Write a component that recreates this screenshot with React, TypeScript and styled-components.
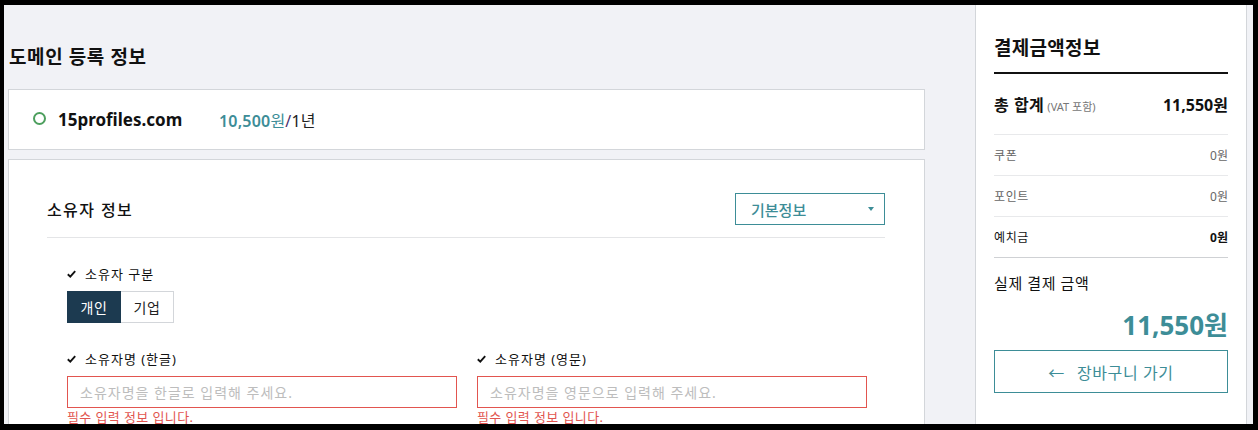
import styled, { createGlobalStyle } from "styled-components";

const GlobalStyle = createGlobalStyle`
  html, body {
    margin: 0;
    padding: 0;
    background: #000;
  }
  body {
    font-family: "Noto Sans", "Noto Sans CJK KR", sans-serif;
    color: #111;
  }
`;

const TEAL = "#3d8d97";
const RED = "#e2554f";

// #region styled
const Frame = styled.div`
  height: 430px;
  box-sizing: border-box;
  padding: 5px 5px 6px 4px;
  overflow: hidden;
`;

const Page = styled.div`
  height: 100%;
  display: flex;
  background: #f1f2f6;
  overflow: hidden;
`;

const Main = styled.div`
  width: 971px;
  flex-shrink: 0;
  box-sizing: border-box;
  padding: 40px 50px 0 4px;
`;

const PageTitle = styled.h2`
  margin: 0 0 20px 1px;
  font-size: 19px;
  line-height: 24px;
  letter-spacing: 0.6px;
  font-weight: 700;
`;

const Card = styled.section`
  background: #fff;
  border: 1px solid #d3d6da;
  margin-bottom: 9px;
`;

const DomainRow = styled.div`
  height: 59px;
  display: flex;
  align-items: center;
  padding-left: 24px;
`;

const Radio = styled.span`
  width: 9px;
  height: 9px;
  border: 2px solid #4d9f5e;
  border-radius: 50%;
  margin-right: 12px;
  margin-top: -3px;
`;

const DomainName = styled.span`
  font-size: 17px;
  font-weight: 700;
  width: 161px;
`;

const Price = styled.span`
  font-size: 16px;
  letter-spacing: 0.2px;
  color: #222;
  em {
    font-style: normal;
    font-weight: 600;
    color: ${TEAL};
  }
  b {
    font-weight: 400;
    color: ${TEAL};
  }
  i {
    font-style: normal;
    color: #4a2f6e;
  }
`;

const OwnerBody = styled.div`
  padding: 33px 39px 40px 38px;
`;

const OwnerHeader = styled.div`
  display: flex;
  align-items: center;
  justify-content: space-between;
  padding-bottom: 12px;
  border-bottom: 1px solid #e4e5e7;
`;

const SectionTitle = styled.h3`
  margin: 0;
  font-size: 16px;
  letter-spacing: 1.4px;
  font-weight: 500;
`;

const Select = styled.div`
  display: flex;
  align-items: center;
  justify-content: space-between;
  padding: 0 10px 0 15px;
  box-sizing: border-box;
  width: 150px;
  height: 32px;
  border: 1px solid ${TEAL};
  color: ${TEAL};
  font-size: 15px;
  font-weight: 500;
`;

const Caret = styled.span`
  width: 0;
  height: 0;
  border-left: 3px solid transparent;
  border-right: 3px solid transparent;
  border-top: 4px solid ${TEAL};
`;

const Form = styled.div`
  padding: 27px 20px 0;
`;

const FieldRow = styled.div`
  display: grid;
  grid-template-columns: 390px 390px;
  column-gap: 20px;
  margin-bottom: 27px;
`;

const Field = styled.div`
  display: flex;
  flex-direction: column;
  align-items: flex-start;
`;

const Label = styled.div`
  display: flex;
  align-items: center;
  gap: 9px;
  font-size: 13px;
  letter-spacing: 1px;
  line-height: 18px;
  margin-bottom: 8px;
  color: #111;
`;

const Segment = styled.div`
  display: flex;
`;

const SegButton = styled.button<{ $active?: boolean }>`
  width: 54px;
  height: 32px;
  font-family: inherit;
  font-size: 14px;
  letter-spacing: 0.5px;
  padding: 0;
  cursor: pointer;
  border: 1px solid ${(p) => (p.$active ? "#1c3a50" : "#d3d6da")};
  background: ${(p) => (p.$active ? "#1c3a50" : "#fff")};
  color: ${(p) => (p.$active ? "#fff" : "#222")};
  & + & {
    border-left: none;
    width: 53px;
  }
`;

const Input = styled.input`
  width: 390px;
  height: 32px;
  box-sizing: border-box;
  border: 1px solid ${RED};
  padding: 0 12px;
  font-family: inherit;
  font-size: 14px;
  letter-spacing: 1px;
  outline: none;
  &::placeholder {
    color: #bdbdbd;
  }
`;

const ErrorText = styled.div`
  color: ${RED};
  font-size: 13px;
  letter-spacing: 0.4px;
  line-height: 18px;
`;

const Side = styled.aside`
  width: 272px;
  flex-shrink: 0;
  box-sizing: border-box;
  background: #fff;
  border-left: 1px solid #d3d6da;
  border-right: 1px solid #d3d6da;
  padding: 31px 18px 0 18px;
`;

const SideTitle = styled.h3`
  margin: 0;
  font-size: 19px;
  line-height: 24px;
  letter-spacing: 0.3px;
  font-weight: 700;
  padding-bottom: 12px;
  border-bottom: 2px solid #111;
`;

const SumRow = styled.div<{ $tall?: boolean; $strongLine?: boolean }>`
  display: flex;
  align-items: center;
  justify-content: space-between;
  height: ${(p) => (p.$tall ? "60px" : "40px")};
  border-bottom: 1px solid ${(p) => (p.$strongLine ? "#cfd1d4" : "#e8e9eb")};
`;

const SumLabel = styled.span<{ $dark?: boolean }>`
  font-size: 12px;
  letter-spacing: 0.6px;
  color: ${(p) => (p.$dark ? "#111" : "#666")};
`;

const SumValue = styled.span<{ $bold?: boolean }>`
  font-size: 12px;
  color: ${(p) => (p.$bold ? "#111" : "#666")};
  font-weight: ${(p) => (p.$bold ? 700 : 400)};
`;

const TotalLabel = styled.span`
  font-size: 16px;
  font-weight: 600;
  letter-spacing: 0.5px;
  small {
    font-size: 11px;
    font-weight: 400;
    letter-spacing: 0;
    color: #777;
    margin-left: 3px;
  }
`;

const TotalValue = styled.span`
  font-size: 16px;
  font-weight: 700;
`;

const FinalLabel = styled.div`
  font-size: 15px;
  letter-spacing: 0.6px;
  margin-top: 15px;
  line-height: 20px;
`;

const FinalAmount = styled.div`
  text-align: right;
  color: ${TEAL};
  font-size: 26px;
  font-weight: 700;
  line-height: 34px;
  margin-top: 15px;
`;

const CartButton = styled.button`
  margin-top: 8px;
  width: 100%;
  height: 43px;
  background: #fff;
  border: 1px solid ${TEAL};
  color: ${TEAL};
  font-family: inherit;
  font-size: 16px;
  letter-spacing: 0.6px;
  display: flex;
  align-items: center;
  justify-content: center;
  gap: 12px;
  cursor: pointer;
`;
// #endregion styled

function Check() {
  return (
    <svg width="9" height="8" viewBox="0 0 9 8">
      <path d="M0.8 4.2 L3.3 6.6 L8.2 1.2" fill="none" stroke="#111" strokeWidth="1.9" />
    </svg>
  );
}

export default function App() {
  return (
    <>
      <GlobalStyle />
      <Frame>
        <Page>
          <Main>
            <PageTitle>도메인 등록 정보</PageTitle>
            <Card>
              <DomainRow>
                <Radio />
                <DomainName>15profiles.com</DomainName>
                <Price>
                  <em>10,500</em>
                  <b>원</b>
                  <i>/</i>1년
                </Price>
              </DomainRow>
            </Card>
            <Card>
              <OwnerBody>
                <OwnerHeader>
                  <SectionTitle>소유자 정보</SectionTitle>
                  <Select>
                    <span>기본정보</span>
                    <Caret />
                  </Select>
                </OwnerHeader>
                <Form>
                  <FieldRow>
                    <Field>
                      <Label>
                        <Check />
                        소유자 구분
                      </Label>
                      <Segment>
                        <SegButton $active>개인</SegButton>
                        <SegButton>기업</SegButton>
                      </Segment>
                    </Field>
                  </FieldRow>
                  <FieldRow>
                    <Field>
                      <Label>
                        <Check />
                        소유자명 (한글)
                      </Label>
                      <Input placeholder="소유자명을 한글로 입력해 주세요." />
                      <ErrorText>필수 입력 정보 입니다.</ErrorText>
                    </Field>
                    <Field>
                      <Label>
                        <Check />
                        소유자명 (영문)
                      </Label>
                      <Input placeholder="소유자명을 영문으로 입력해 주세요." />
                      <ErrorText>필수 입력 정보 입니다.</ErrorText>
                    </Field>
                  </FieldRow>
                </Form>
              </OwnerBody>
            </Card>
          </Main>
          <Side>
            <SideTitle>결제금액정보</SideTitle>
            <SumRow $tall>
              <TotalLabel>
                총 합계<small>(VAT 포함)</small>
              </TotalLabel>
              <TotalValue>11,550원</TotalValue>
            </SumRow>
            <SumRow>
              <SumLabel>쿠폰</SumLabel>
              <SumValue>0원</SumValue>
            </SumRow>
            <SumRow>
              <SumLabel>포인트</SumLabel>
              <SumValue>0원</SumValue>
            </SumRow>
            <SumRow $strongLine>
              <SumLabel $dark>예치금</SumLabel>
              <SumValue $bold>0원</SumValue>
            </SumRow>
            <FinalLabel>실제 결제 금액</FinalLabel>
            <FinalAmount>11,550원</FinalAmount>
            <CartButton>
              <span>←</span>
              <span>장바구니 가기</span>
            </CartButton>
          </Side>
        </Page>
      </Frame>
    </>
  );
}
